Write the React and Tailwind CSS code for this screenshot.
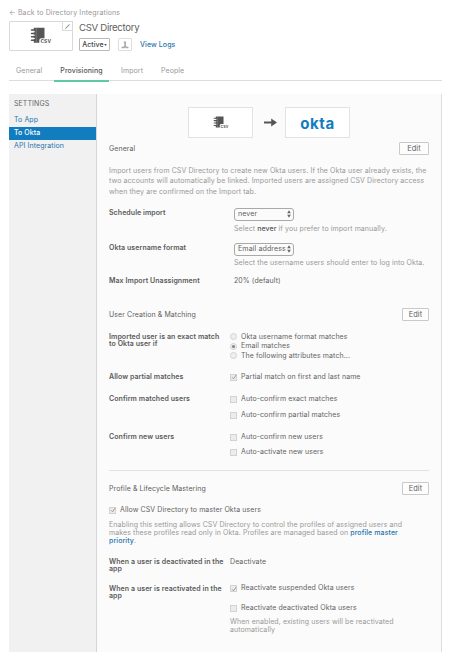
import React from "react";

function CsvIcon({ className }) {
  return (
    <svg viewBox="0 0 22 18" className={className}>
      <path d="M3.8 .8h10.7v10.4h-3.2a2 2 0 0 0-2 2v2.6H3.8z" fill="#555" />
      <path d="M6.2 .8v15" stroke="#a5a5a5" strokeWidth=".5" />
      <path d="M1.5 4.8h3.4M1.5 8.1h3.4M1.5 11.4h3.4" stroke="#fff" strokeWidth="1" />
      <path d="M1.5 3h3.5M1.5 6.4h3.5M1.5 9.8h3.5M1.5 13.2h3.5" stroke="#555" strokeWidth="1.5" strokeLinecap="round" />
      <text x="10.4" y="16" fontSize="6" letterSpacing=".2" fontWeight="600" fill="#555" fontFamily="Inter, sans-serif">csv</text>
    </svg>
  );
}

function Edit({ className = "w-[27px]" }) {
  return (
    <button className={`h-[13px] shrink-0 rounded-[1px] border border-[#c9c9c9] bg-[#fdfdfd] text-center text-[7.4px] leading-[11px] text-[#5e5e5e] ${className}`}>
      Edit
    </button>
  );
}

function Select({ children }) {
  return (
    <div className="flex h-[13px] w-[60px] items-center justify-between rounded-[3px] border border-[#a9a9a9] bg-[#fbfbfb] pr-[2px] pl-[3px] text-[7.1px] leading-[11px] text-[#5e5e5e]">
      <span className="-mt-px">{children}</span>
      <svg viewBox="0 0 4 8" className="h-[8px] w-[4px]">
        <path d="M2 .3 3.8 3.3H.2zM2 7.7 3.8 4.7H.2z" fill="#666" />
      </svg>
    </div>
  );
}

function Check({ on }) {
  return (
    <span className="mt-[2px] flex h-[7px] w-[7px] shrink-0 items-center justify-center border border-[#d2d2d2] bg-[#ececec]">
      {on && (
        <svg viewBox="0 0 6 6" className="h-[6px] w-[6px] shrink-0">
          <path d="M1 3.2 2.5 4.8 5.2 1" fill="none" stroke="#888" strokeWidth=".8" />
        </svg>
      )}
    </span>
  );
}

function CheckRow({ on, children, className = "" }) {
  return (
    <label className={`flex h-[10px] gap-[4px] text-[7px] leading-[10px] text-[#636363] ${className}`}>
      <Check on={on} />
      <span>{children}</span>
    </label>
  );
}

function Radio({ on, children }) {
  return (
    <label className="flex h-[9.5px] items-center gap-[4px] text-[7px] leading-[9.5px] text-[#636363]">
      <span className="flex h-[7px] w-[7px] items-center justify-center rounded-full border border-[#d2d2d2] bg-[#efefef]">
        {on && <span className="h-[3px] w-[3px] rounded-full bg-[#808080]" />}
      </span>
      <span>{children}</span>
    </label>
  );
}

function Row({ label, children, className = "", side = "w-[121px]" }) {
  return (
    <div className={`flex ${className}`}>
      <div className={`shrink-0 pt-[1px] text-[7px] leading-[7px] font-semibold tracking-[0.07px] whitespace-pre text-[#5a5a5a] ${side}`}>{label}</div>
      <div>{children}</div>
    </div>
  );
}

export default function App() {
  return (
    <div className="flex h-[652px] w-[450px] flex-col overflow-hidden bg-white pl-[9px] font-['Inter','Liberation_Sans',sans-serif] text-[7px] tracking-[0.085px] whitespace-nowrap text-[#5e5e5e]">
      <div className="mt-[8px] h-[10px] leading-[10px] tracking-[0.13px] text-[#999]">← Back to Directory Integrations</div>
      <header className="mt-[3px] flex h-[30px]">
        <div className="relative flex w-[64px] items-center justify-center rounded-[1px] border border-[#d9d9d9]">
          <CsvIcon className="h-[18px] w-[22px]" />
          <div className="absolute -top-px -right-px flex h-[10px] w-[11px] items-center justify-center border border-[#d9d9d9] bg-white">
            <svg viewBox="0 0 8 8" className="h-[7px] w-[7px]">
              <path d="M1 7 1.7 5.4 6 1.1l.8.8-4.2 4.3z" fill="#999" />
            </svg>
          </div>
        </div>
        <div className="ml-[6px] flex flex-col">
          <div className="h-[14px] text-[9.6px] leading-[14px] tracking-[-0.3px]">CSV Directory</div>
          <div className="mt-[3px] flex h-[13px]">
            <div className="flex w-[31px] items-center justify-center rounded-[1px] border border-[#b9b9b9] text-[7px] leading-[11px] font-medium text-[#444]">
              Active
              <svg viewBox="0 0 4 3" className="h-[2px] w-[3px]"><path d="M0 0h4L2 3z" fill="#555" /></svg>
            </div>
            <div className="ml-[8px] flex w-[14px] items-center justify-center rounded-[1px] border border-[#ddd]">
              <svg viewBox="0 0 8 8" className="h-[8px] w-[8px]">
                <path d="M2.8 .5H5v4.7l2.5.8v1.2H5.2L4.4 6.5l-.8.7H.5V6l2.8-.7V2.2h-.5z" fill="#aaa" />
              </svg>
            </div>
            <div className="ml-[8px] leading-[13px] font-medium text-[#1f74ae]">View Logs</div>
          </div>
        </div>
      </header>

      <nav className="mt-[10px] flex h-[20px] w-[433px] border-b border-[#ddd] leading-[19px] text-[#999]">
        <div className="w-[45px] pl-[7px]">General</div>
        <div className="-mb-px h-[21px] w-[55px] border-b-2 border-[#5fc9a3] text-center font-medium text-[#555]">Provisioning</div>
        <div className="ml-[12px] w-[40px]">Import</div>
        <div>People</div>
      </nav>

      <div className="mt-[13px] flex w-[433px] flex-1">
        <aside className="w-[88px] border-r border-[#d5d5d5] bg-[#f1f1f1]">
          <div className="mt-[5px] h-[10px] pl-[5px] leading-[10px] text-[#666]">SETTINGS</div>
          <div className="mt-[5px] h-[12px] pl-[5px] leading-[12px] text-[#1f74ae]">To App</div>
          <div className="mt-[1px] h-[13px] bg-[#127dbe] pl-[5px] leading-[12px] font-medium text-white">To Okta</div>
          <div className="h-[13px] pl-[5px] leading-[12px] text-[#1f74ae]">API Integration</div>
        </aside>

        <main className="flex w-[345px] flex-col border-r border-[#dedede] bg-[#fbfbfb] pr-[12px] pl-[12px]">
          <div className="mt-[13px] ml-[79px] flex h-[31px] items-center">
            <div className="flex h-[31px] w-[65px] items-center justify-center border border-[#e2e2e2] bg-white">
              <CsvIcon className="h-[13px] w-[16px]" />
            </div>
            <svg viewBox="0 0 13 9" className="ml-[11px] h-[9px] w-[13px]">
              <path d="M0 3.4h7.2V.4L13 4.5 7.2 8.6v-3H0z" fill="#555" />
            </svg>
            <div className="ml-[8px] flex h-[31px] w-[65px] items-center justify-center border border-[#e2e2e2] bg-white pt-px font-['Inter',sans-serif] text-[15px] leading-none font-bold tracking-[0.6px] text-[#127dbe]">
              okta
            </div>
          </div>

          <div className="mt-[4px] flex h-[13px] justify-between leading-[13px]">
            <span>General</span>
            <Edit className="w-[30px]" />
          </div>
          <div className="mt-[11px] leading-[10.25px] text-[#999]">
            Import users from CSV Directory to create new Okta users. If the Okta user already exists, the<br />
            two accounts will automatically be linked. Imported users are assigned CSV Directory access<br />
            when they are confirmed on the Import tab.
          </div>
          <Row label="Schedule import" side="w-[125px]" className="mt-[11px] h-[35px]">
            <Select>never</Select>
            <div className="mt-[3px] leading-[10px] text-[#999]">Select <b className="font-medium text-[#555]">never</b> if you prefer to import manually.</div>
          </Row>
          <Row label="Okta username format" side="w-[125px]" className="h-[33px]">
            <Select>Email address</Select>
            <div className="mt-[2px] leading-[10px] text-[#999]">Select the username users should enter to log into Okta.</div>
          </Row>
          <Row label="Max Import Unassignment" side="w-[125px]" className="h-[32px]">
            <div className="leading-[10px]">20% (default)</div>
          </Row>

          <div className="flex h-[13px] justify-between leading-[13px]">
            <span>User Creation &amp; Matching</span>
            <Edit />
          </div>
          <Row label={"Imported user is an exact match\nto Okta user if"} className="mt-[11px] h-[40px]">
            <Radio>Okta username format matches</Radio>
            <Radio on>Email matches</Radio>
            <Radio>The following attributes match...</Radio>
          </Row>
          <Row label="Allow partial matches" className="h-[22px]">
            <CheckRow on>Partial match on first and last name</CheckRow>
          </Row>
          <Row label="Confirm matched users" className="h-[38px]">
            <CheckRow>Auto-confirm exact matches</CheckRow>
            <CheckRow className="mt-[6px]">Auto-confirm partial matches</CheckRow>
          </Row>
          <Row label="Confirm new users" className="h-[38px]">
            <CheckRow>Auto-confirm new users</CheckRow>
            <CheckRow className="mt-[5px]">Auto-activate new users</CheckRow>
          </Row>

          <div className="flex h-[25px] items-end justify-between border-t border-[#e2e2e2] leading-[13px]">
            <span>Profile &amp; Lifecycle Mastering</span>
            <Edit />
          </div>
          <CheckRow on className="mt-[10px]">Allow CSV Directory to master Okta users</CheckRow>
          <div className="mt-[6px] leading-[7.9px] text-[#999]">
            Enabling this setting allows CSV Directory to control the profiles of assigned users and<br />
            makes these profiles read only in Okta. Profiles are managed based on <span className="font-medium text-[#1f74ae]">profile master</span><br />
            <span className="font-medium text-[#1f74ae]">priority</span>.
          </div>
          <Row label={"When a user is deactivated in the\napp"} className="mt-[13px] h-[27px]">
            <div className="leading-[10px]">Deactivate</div>
          </Row>
          <Row label={"When a user is reactivated in the\napp"} className="h-[50px]">
            <CheckRow on className="-mt-px">Reactivate suspended Okta users</CheckRow>
            <CheckRow className="mt-[10px]">Reactivate deactivated Okta users</CheckRow>
            <div className="mt-[5px] leading-[8px] text-[#999]">
              When enabled, existing users will be reactivated<br />automatically
            </div>
          </Row>
        </main>
      </div>
    </div>
  );
}
